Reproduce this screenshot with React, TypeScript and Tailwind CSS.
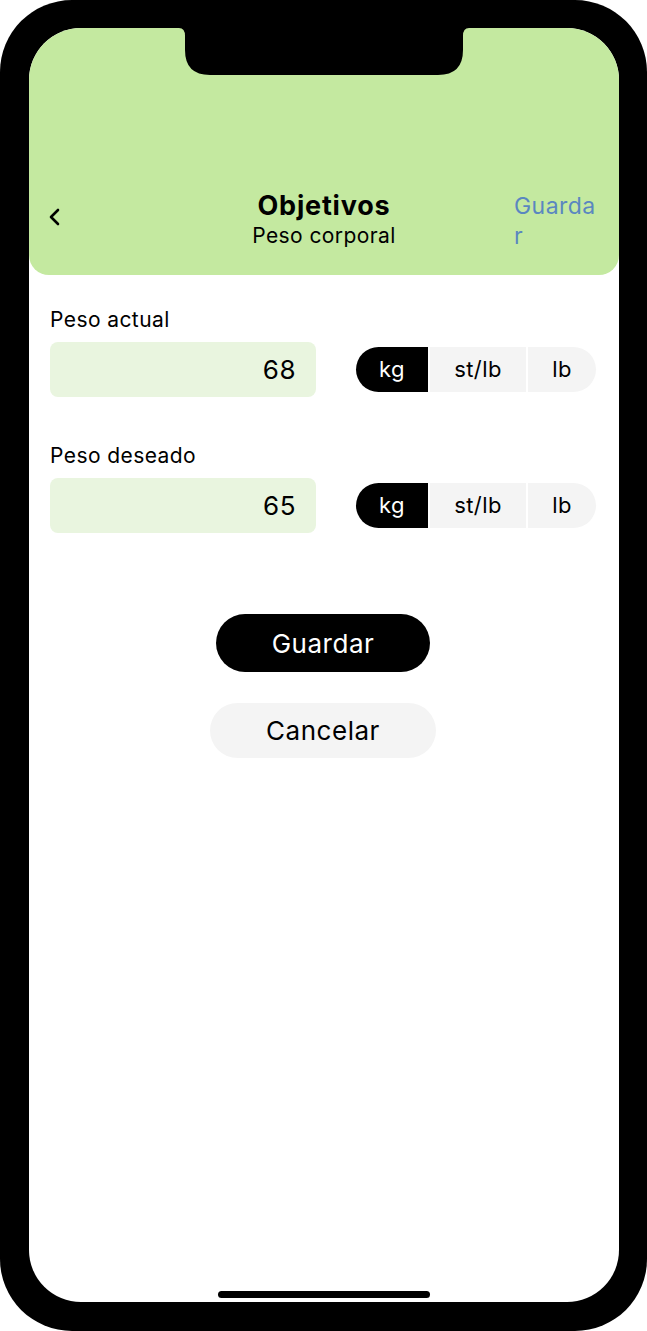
import React from "react";

const font = { fontFamily: "Inter, 'Noto Sans', sans-serif" };

function Segmented() {
  return (
    <div className="flex h-[45px] w-[240px] gap-[2px] text-[22px] tracking-[0.02em]">
      <div className="flex w-[72px] items-center justify-center rounded-l-full bg-black text-white">kg</div>
      <div className="flex w-[96px] items-center justify-center bg-[#f4f4f4] text-black">st/lb</div>
      <div className="flex flex-1 items-center justify-center rounded-r-full bg-[#f4f4f4] text-black">lb</div>
    </div>
  );
}

function Field({ label, value, mt }: { label: string; value: string; mt: string }) {
  return (
    <div className={`flex flex-col ${mt}`}>
      <div className="text-[21px] leading-[24px] tracking-[0.02em] text-black">{label}</div>
      <div className="mt-[10px] flex items-center gap-[40px]">
        <div className="flex h-[55px] w-[266px] items-center justify-end rounded-[8px] bg-[#e9f5df] pr-[20px] text-[26px] tracking-[0.02em] text-black">
          {value}
        </div>
        <Segmented />
      </div>
    </div>
  );
}

export default function App() {
  return (
    <div className="h-[1331px] w-[647px] bg-white" style={font}>
      <div className="flex h-full w-full rounded-[72px] bg-black pb-[29px] pl-[29px] pr-[28px] pt-[28px]">
        <div className="relative flex flex-1 flex-col overflow-hidden rounded-[52px] bg-white">
          <svg className="absolute left-[150px] top-0 z-10" width="292" height="48" viewBox="0 0 292 48">
            <path d="M0 0 Q6 0 6 8 V22 Q6 47 31 47 H259 Q284 47 284 22 V8 Q284 0 290 0 Z" fill="black" />
          </svg>
          <header className="flex h-[247px] items-end rounded-b-[20px] bg-[#c4e9a0] pb-[24px]">
            <div className="flex w-full items-start">
              <div className="flex w-[105px] pl-[18px] pt-[16px]">
                <svg width="16" height="20" viewBox="0 0 16 20">
                  <path d="M11 3 L4 10 L11 17" fill="none" stroke="black" strokeWidth="2.6" strokeLinecap="round" strokeLinejoin="round" />
                </svg>
              </div>
              <div className="flex flex-1 flex-col items-center">
                <div className="text-[27px] font-bold leading-[30px] tracking-[0.03em] text-black">Objetivos</div>
                <div className="mt-[2px] text-[21px] leading-[26px] tracking-[0.02em] text-black">Peso corporal</div>
              </div>
              <div className="w-[105px]">
                <div className="w-[88px] break-all text-[23px] leading-[30px] tracking-[0.02em] text-[#5a87c0]">Guardar</div>
              </div>
            </div>
          </header>
          <main className="flex flex-col pl-[21px] pr-[23px]">
            <Field label="Peso actual" value="68" mt="mt-[33px]" />
            <Field label="Peso deseado" value="65" mt="mt-[47px]" />
            <div className="mt-[81px] flex flex-col items-center">
              <button className="flex h-[58px] w-[214px] items-center justify-center rounded-full bg-black text-[26px] tracking-[0.02em] text-white">
                Guardar
              </button>
              <button className="mt-[31px] flex h-[55px] w-[226px] items-center justify-center rounded-full bg-[#f4f4f4] text-[26px] tracking-[0.02em] text-black">
                Cancelar
              </button>
            </div>
          </main>
          <div className="mt-auto flex justify-center pb-[4px]">
            <div className="h-[7px] w-[212px] rounded-full bg-black" />
          </div>
        </div>
      </div>
    </div>
  );
}
